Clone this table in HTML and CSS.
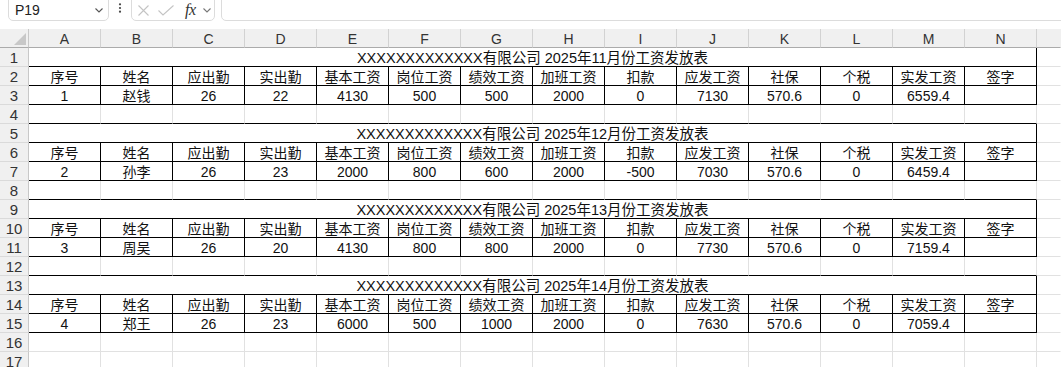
FILE: index.html
```html
<!DOCTYPE html>
<html lang="zh-CN">
<head>
<meta charset="utf-8">
<title>工资发放表</title>
<link rel="stylesheet" href="styles.css">
</head>
<body>
<div class="toolbar">
  <div class="namebox">
    <span class="ref">P19</span>
    <svg class="chev" width="8" height="5" viewBox="0 0 8 5"><path d="M0.5 0.5 L4 4 L7.5 0.5" fill="none" stroke="#555" stroke-width="1.1"/></svg>
  </div>
  <div class="dots">
    <svg width="4" height="16" viewBox="0 0 4 16"><circle cx="2" cy="4.3" r="1.1" fill="#444"/><circle cx="2" cy="8" r="1.1" fill="#444"/><circle cx="2" cy="11.7" r="1.1" fill="#444"/></svg>
  </div>
  <div class="fxbox">
    <svg class="ico-x" width="11" height="11" viewBox="0 0 11 11"><path d="M0.5 0.5 L10.5 10.5 M10.5 0.5 L0.5 10.5" stroke="#c4c4c4" stroke-width="1.1" fill="none"/></svg>
    <svg class="ico-ok" width="16" height="11" viewBox="0 0 16 11"><path d="M0.5 5.5 L5 10 L15.5 0.5" stroke="#c4c4c4" stroke-width="1.1" fill="none"/></svg>
    <span class="fx">fx</span>
    <svg class="chev2" width="8" height="5" viewBox="0 0 8 5"><path d="M0.5 0.5 L4 4 L7.5 0.5" fill="none" stroke="#777" stroke-width="1.1"/></svg>
  </div>
  <div class="formula"></div>
</div>

<table class="sheet">
  <colgroup>
    <col class="rhc"><col class="c"><col class="c"><col class="c"><col class="c"><col class="c"><col class="c"><col class="c"><col class="c"><col class="c"><col class="c"><col class="c"><col class="c"><col class="c"><col class="c"><col class="rest">
  </colgroup>
  <tr class="hdr">
    <th class="corner"><svg width="28" height="18" viewBox="0 0 28 18"><polygon points="26,4 26,16 14,16" fill="#c8c8c8"/></svg></th>
    <th>A</th><th>B</th><th>C</th><th>D</th><th>E</th><th>F</th><th>G</th><th>H</th><th>I</th><th>J</th><th>K</th><th>L</th><th>M</th><th>N</th><th class="o"></th>
  </tr>

  <tr><th class="rh">1</th><td class="title" colspan="14">XXXXXXXXXXXXX有限公司 2025年11月份工资发放表</td><td class="o"></td></tr>
  <tr class="b"><th class="rh">2</th><td>序号</td><td>姓名</td><td>应出勤</td><td>实出勤</td><td>基本工资</td><td>岗位工资</td><td>绩效工资</td><td>加班工资</td><td>扣款</td><td>应发工资</td><td>社保</td><td>个税</td><td>实发工资</td><td>签字</td><td class="o"></td></tr>
  <tr class="b"><th class="rh">3</th><td>1</td><td>赵钱</td><td>26</td><td>22</td><td>4130</td><td>500</td><td>500</td><td>2000</td><td>0</td><td>7130</td><td>570.6</td><td>0</td><td>6559.4</td><td></td><td class="o"></td></tr>
  <tr class="above"><th class="rh">4</th><td></td><td></td><td></td><td></td><td></td><td></td><td></td><td></td><td></td><td></td><td></td><td></td><td></td><td></td><td class="o"></td></tr>

  <tr><th class="rh">5</th><td class="title" colspan="14">XXXXXXXXXXXXX有限公司 2025年12月份工资发放表</td><td class="o"></td></tr>
  <tr class="b"><th class="rh">6</th><td>序号</td><td>姓名</td><td>应出勤</td><td>实出勤</td><td>基本工资</td><td>岗位工资</td><td>绩效工资</td><td>加班工资</td><td>扣款</td><td>应发工资</td><td>社保</td><td>个税</td><td>实发工资</td><td>签字</td><td class="o"></td></tr>
  <tr class="b"><th class="rh">7</th><td>2</td><td>孙李</td><td>26</td><td>23</td><td>2000</td><td>800</td><td>600</td><td>2000</td><td>-500</td><td>7030</td><td>570.6</td><td>0</td><td>6459.4</td><td></td><td class="o"></td></tr>
  <tr class="above"><th class="rh">8</th><td></td><td></td><td></td><td></td><td></td><td></td><td></td><td></td><td></td><td></td><td></td><td></td><td></td><td></td><td class="o"></td></tr>

  <tr><th class="rh">9</th><td class="title" colspan="14">XXXXXXXXXXXXX有限公司 2025年13月份工资发放表</td><td class="o"></td></tr>
  <tr class="b"><th class="rh">10</th><td>序号</td><td>姓名</td><td>应出勤</td><td>实出勤</td><td>基本工资</td><td>岗位工资</td><td>绩效工资</td><td>加班工资</td><td>扣款</td><td>应发工资</td><td>社保</td><td>个税</td><td>实发工资</td><td>签字</td><td class="o"></td></tr>
  <tr class="b"><th class="rh">11</th><td>3</td><td>周吴</td><td>26</td><td>20</td><td>4130</td><td>800</td><td>800</td><td>2000</td><td>0</td><td>7730</td><td>570.6</td><td>0</td><td>7159.4</td><td></td><td class="o"></td></tr>
  <tr class="above"><th class="rh">12</th><td></td><td></td><td></td><td></td><td></td><td></td><td></td><td></td><td></td><td></td><td></td><td></td><td></td><td></td><td class="o"></td></tr>

  <tr><th class="rh">13</th><td class="title" colspan="14">XXXXXXXXXXXXX有限公司 2025年14月份工资发放表</td><td class="o"></td></tr>
  <tr class="b"><th class="rh">14</th><td>序号</td><td>姓名</td><td>应出勤</td><td>实出勤</td><td>基本工资</td><td>岗位工资</td><td>绩效工资</td><td>加班工资</td><td>扣款</td><td>应发工资</td><td>社保</td><td>个税</td><td>实发工资</td><td>签字</td><td class="o"></td></tr>
  <tr class="b"><th class="rh">15</th><td>4</td><td>郑王</td><td>26</td><td>23</td><td>6000</td><td>500</td><td>1000</td><td>2000</td><td>0</td><td>7630</td><td>570.6</td><td>0</td><td>7059.4</td><td></td><td class="o"></td></tr>
  <tr><th class="rh">16</th><td></td><td></td><td></td><td></td><td></td><td></td><td></td><td></td><td></td><td></td><td></td><td></td><td></td><td></td><td class="o"></td></tr>
  <tr><th class="rh">17</th><td></td><td></td><td></td><td></td><td></td><td></td><td></td><td></td><td></td><td></td><td></td><td></td><td></td><td></td><td class="o"></td></tr>
</table>
</body>
</html>
```

FILE: styles.css
```css
* { box-sizing: border-box; }

html, body {
  margin: 0;
  background: #ffffff;
}

body {
  width: 1061px;
  height: 367px;
  overflow: hidden;
  font-family: "Liberation Sans", "Noto Sans CJK SC", sans-serif;
  color: #111;
}

/* ---------- top bar ---------- */
.toolbar {
  display: flex;
  align-items: flex-start;
  height: 29px;
  padding-left: 8px;
  overflow: hidden;
}

.namebox {
  width: 101px;
  height: 27px;
  margin-top: -6px;
  border: 1px solid #dcdcdc;
  border-radius: 5px;
  display: flex;
  align-items: center;
  justify-content: space-between;
  padding: 4px 5px 0 6px;
  flex: none;
}

.ref {
  font-size: 14px;
  line-height: 14px;
  color: #222;
}

.chev { display: block; margin-top: 1px; }

.dots {
  width: 22px;
  height: 16px;
  display: flex;
  justify-content: center;
  flex: none;
}

.dots svg { display: block; }

.fxbox {
  width: 84px;
  height: 27px;
  margin-top: -6px;
  border: 1px solid #dcdcdc;
  border-radius: 5px;
  display: flex;
  align-items: center;
  padding: 5px 0 0 6px;
  flex: none;
}

.fxbox svg { display: block; flex: none; }
.ico-ok { margin-left: 9px; }

.fx {
  margin-left: 11px;
  font-family: "Liberation Serif", serif;
  font-style: italic;
  font-size: 16px;
  line-height: 14px;
  color: #333;
  letter-spacing: -0.5px;
}

.chev2 { margin-left: 7px; }

.formula {
  flex: 1;
  height: 27px;
  margin-top: -6px;
  margin-left: 6px;
  margin-right: -20px;
  border: 1px solid #dcdcdc;
  border-radius: 5px;
}

/* ---------- sheet ---------- */
.sheet {
  border-collapse: separate;
  border-spacing: 0;
  table-layout: fixed;
  width: 1061px;
  font-size: 14px;
}

.sheet col.rhc { width: 29px; }
.sheet col.c { width: 72px; }
.sheet col.rest { width: 24px; }

.sheet tr { height: 19px; }

.sheet td,
.sheet th {
  padding: 2px 0 0 0;
  line-height: 16px;
  text-align: center;
  white-space: nowrap;
  overflow: hidden;
  font-weight: normal;
  border-right: 1px solid #e1e1e1;
  border-bottom: 1px solid #e1e1e1;
}

/* column header row */
.sheet tr.hdr th {
  background: #f0f0f0;
  color: #333;
  font-size: 14px;
  line-height: 15px;
  padding-top: 3px;
  border-right: 1px solid #d2d2d2;
  border-bottom: 1px solid #ababab;
}

.sheet tr.hdr th.corner {
  padding: 0;
  vertical-align: top;
  border-right: 1px solid #c8c8c8;
}

.corner svg { display: block; }

/* row header column */
.sheet th.rh {
  background: #f0f0f0;
  color: #333;
  font-size: 15px;
  border-right: 1px solid #c8c8c8;
  border-bottom: 1px solid #dadada;
}

/* table borders */
.sheet td.title {
  font-size: 14.5px;
  border-right-color: #000;
  border-bottom-color: #000;
}

.sheet tr.b td {
  border-right-color: #000;
  border-bottom-color: #000;
}

.sheet tr.above td {
  border-bottom-color: #000;
}

.sheet tr td.o,
.sheet tr.hdr th.o {
  border-right-color: transparent;
}

.sheet tr td.o {
  border-bottom-color: #e1e1e1;
}
```
